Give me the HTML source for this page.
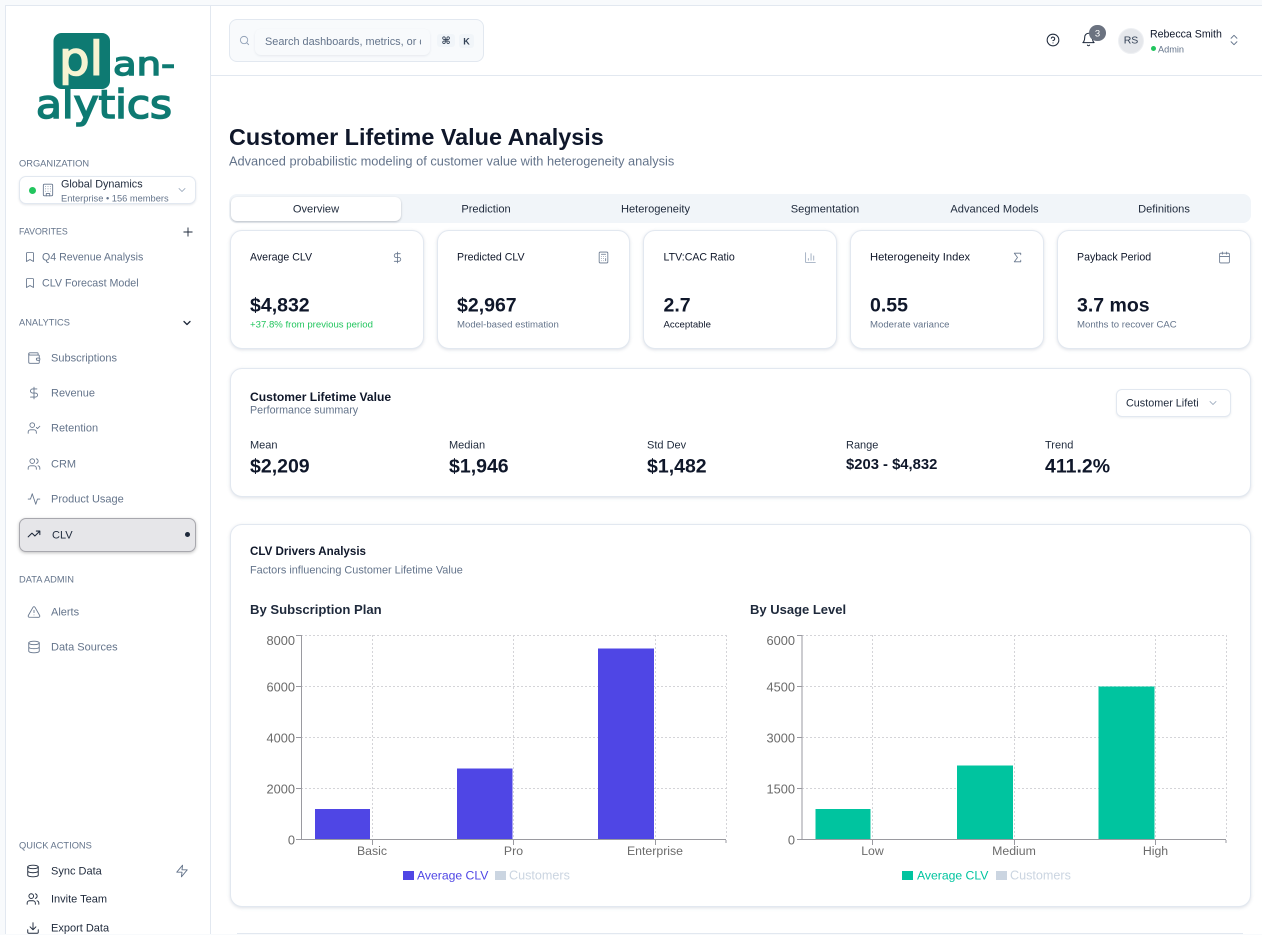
<!DOCTYPE html>
<html lang="en"><head><meta charset="utf-8"><title>Customer Lifetime Value Analysis</title>
<style>
*{box-sizing:border-box}
html,body{margin:0;padding:0}
body{width:1262px;height:934px;overflow:hidden;position:relative;background:#f8fafc;font-family:"Liberation Sans",sans-serif;color:#0f172a}
.t{position:absolute;white-space:nowrap;transform:translateY(calc(-50% + 1px));line-height:1.2}
.c{transform:translate(-50%,calc(-50% + 1px))}
.b{position:absolute}
svg.i{position:absolute;fill:none;stroke:currentColor;stroke-width:2;stroke-linecap:round;stroke-linejoin:round;overflow:visible}
.card{position:absolute;background:#fff;border:1px solid #e2e8f0;border-radius:12px;box-shadow:0 1px 3px rgba(100,116,139,.22)}
.lab{font-size:9.3px;color:#64748b}
.nav{font-size:11px;color:#64748b}
.qa{font-size:11px;color:#1e293b}
.ct{font-size:10.6px;color:#0f172a}
.cv{font-size:19.5px;font-weight:700;color:#0f172a}
.cs{font-size:9.6px;color:#64748b}
.tab{font-size:11.1px;color:#1e293b}
.sl{font-size:11px;color:#1e293b}
.sv{font-size:19.5px;font-weight:700;color:#0f172a}
</style></head><body>

<!-- main surfaces -->
<div class="b" style="left:5px;top:5px;width:1257px;height:929px;background:#fff;border-top:1px solid #e2e8f0;border-left:1px solid #e2e8f0"></div>
<div class="b" style="left:6px;top:6px;width:205px;height:928px;background:#fff;border-right:1px solid #e2e8f0"></div>
<div class="b" style="left:211px;top:75px;width:1051px;height:1px;background:#e2e8f0"></div>

<!-- logo -->
<svg class="b" style="left:30px;top:20px" width="160" height="120" viewBox="30 20 160 120">
<rect x="53.5" y="33" width="56.5" height="56" rx="8" fill="#0e7a72"/>
<text x="59" y="75" font-family="DejaVu Sans" font-size="46" fill="#f6f3d2" stroke="#f6f3d2" stroke-width="1.5" textLength="44" lengthAdjust="spacingAndGlyphs">pl</text>
<text x="113" y="75" font-family="DejaVu Sans" font-size="32" fill="#0e7a72" stroke="#0e7a72" stroke-width="1.4" textLength="62" lengthAdjust="spacingAndGlyphs">an-</text>
<text x="36" y="118" font-family="DejaVu Sans" font-size="39" fill="#0e7a72" stroke="#0e7a72" stroke-width="1.6" textLength="136" lengthAdjust="spacingAndGlyphs">alytics</text>
</svg>

<!-- sidebar -->
<span class="t lab" style="left:19px;top:163px">ORGANIZATION</span>
<div class="b" style="left:19px;top:176px;width:177px;height:28px;border:1px solid #e2e8f0;border-radius:7px;background:#fff;box-shadow:0 1px 2px rgba(100,116,139,.18)"></div>
<div class="b" style="left:29px;top:186.5px;width:7px;height:7px;border-radius:50%;background:#22c55e"></div>
<svg class="i" style="left:41px;top:183px;color:#64748b;stroke-width:1.5" width="14" height="14" viewBox="0 0 24 24"><rect x="4" y="2" width="16" height="20" rx="2"/><path d="M9 22v-4h6v4M8 6h.01M16 6h.01M12 6h.01M12 10h.01M12 14h.01M16 10h.01M16 14h.01M8 10h.01M8 14h.01"/></svg>
<span class="t" style="left:61px;top:184px;font-size:10.8px;color:#1e293b">Global Dynamics</span>
<span class="t" style="left:61px;top:198px;font-size:9.3px;color:#64748b">Enterprise • 156 members</span>
<svg class="i" style="left:176px;top:184px;color:#94a3b8;stroke-width:1.7" width="12" height="12" viewBox="0 0 24 24"><path d="m6 9 6 6 6-6"/></svg>

<span class="t lab" style="left:19px;top:231px;font-size:8.8px">FAVORITES</span>
<svg class="i" style="left:183px;top:227px;color:#1e293b;stroke-width:2.2" width="10" height="10" viewBox="0 0 24 24"><path d="M2 12h20M12 2v20"/></svg>
<svg class="i" style="left:24px;top:251px;color:#64748b;stroke-width:1.7" width="12" height="12" viewBox="0 0 24 24"><path d="m19 21-7-4-7 4V5a2 2 0 0 1 2-2h10a2 2 0 0 1 2 2v16z"/></svg>
<span class="t nav" style="left:42px;top:257px;font-size:10.6px">Q4 Revenue Analysis</span>
<svg class="i" style="left:24px;top:277px;color:#64748b;stroke-width:1.7" width="12" height="12" viewBox="0 0 24 24"><path d="m19 21-7-4-7 4V5a2 2 0 0 1 2-2h10a2 2 0 0 1 2 2v16z"/></svg>
<span class="t nav" style="left:42px;top:283px;font-size:10.7px">CLV Forecast Model</span>

<span class="t lab" style="left:19px;top:322px">ANALYTICS</span>
<svg class="i" style="left:181px;top:317px;color:#1e293b;stroke-width:2.6" width="12" height="12" viewBox="0 0 24 24"><path d="m6 9 6 6 6-6"/></svg>

<svg class="i" style="left:27px;top:350.5px;color:#64748b;stroke-width:1.5" width="14" height="14" viewBox="0 0 24 24"><path d="M19 7V4a1 1 0 0 0-1-1H5a2 2 0 0 0 0 4h15a1 1 0 0 1 1 1v4h-3a2 2 0 0 0 0 4h3a1 1 0 0 0 1-1v-2a1 1 0 0 0-1-1"/><path d="M3 5v14a2 2 0 0 0 2 2h15a1 1 0 0 0 1-1v-4"/></svg>
<span class="t nav" style="left:51px;top:358px">Subscriptions</span>
<svg class="i" style="left:27px;top:386px;color:#64748b;stroke-width:1.5" width="14" height="14" viewBox="0 0 24 24"><path d="M12 2v20M17 5H9.5a3.5 3.5 0 0 0 0 7h5a3.5 3.5 0 0 1 0 7H6"/></svg>
<span class="t nav" style="left:51px;top:393px">Revenue</span>
<svg class="i" style="left:27px;top:421px;color:#64748b;stroke-width:1.5" width="14" height="14" viewBox="0 0 24 24"><path d="M16 21v-2a4 4 0 0 0-4-4H6a4 4 0 0 0-4 4v2"/><circle cx="9" cy="7" r="4"/><path d="m16 11 2 2 4-4"/></svg>
<span class="t nav" style="left:51px;top:428px">Retention</span>
<svg class="i" style="left:27px;top:457px;color:#64748b;stroke-width:1.5" width="14" height="14" viewBox="0 0 24 24"><path d="M16 21v-2a4 4 0 0 0-4-4H6a4 4 0 0 0-4 4v2"/><circle cx="9" cy="7" r="4"/><path d="M22 21v-2a4 4 0 0 0-3-3.87M16 3.13a4 4 0 0 1 0 7.75"/></svg>
<span class="t nav" style="left:51px;top:463.5px">CRM</span>
<svg class="i" style="left:27px;top:492px;color:#64748b;stroke-width:1.5" width="14" height="14" viewBox="0 0 24 24"><path d="M22 12h-4l-3 9L9 3l-3 9H2"/></svg>
<span class="t nav" style="left:51px;top:499px">Product Usage</span>

<div class="b" style="left:19px;top:518px;width:177px;height:33.5px;background:#e6e6e9;border:1px solid #a8a8ae;border-radius:7px;box-shadow:0 1px 3px rgba(0,0,0,.25)"></div>
<svg class="i" style="left:27px;top:527px;color:#1e293b;stroke-width:1.8" width="14" height="14" viewBox="0 0 24 24"><path d="M22 7l-8.5 8.5-5-5L2 17M16 7h6v6"/></svg>
<span class="t" style="left:52px;top:534.5px;font-size:11px;color:#1e293b">CLV</span>
<div class="b" style="left:184.5px;top:532px;width:5px;height:5px;border-radius:50%;background:#1e293b"></div>

<span class="t lab" style="left:19px;top:578.5px">DATA ADMIN</span>
<svg class="i" style="left:27px;top:605px;color:#64748b;stroke-width:1.5" width="14" height="14" viewBox="0 0 24 24"><path d="m21.73 18-8-14a2 2 0 0 0-3.48 0l-8 14A2 2 0 0 0 4 21h16a2 2 0 0 0 1.73-3M12 9v4M12 17h.01"/></svg>
<span class="t nav" style="left:51px;top:612px">Alerts</span>
<svg class="i" style="left:27px;top:640px;color:#64748b;stroke-width:1.5" width="14" height="14" viewBox="0 0 24 24"><ellipse cx="12" cy="5" rx="9" ry="3"/><path d="M3 5V19A9 3 0 0 0 21 19V5M3 12A9 3 0 0 0 21 12"/></svg>
<span class="t nav" style="left:51px;top:647px">Data Sources</span>

<span class="t lab" style="left:19px;top:845px">QUICK ACTIONS</span>
<svg class="i" style="left:26px;top:864px;color:#1e293b;stroke-width:1.6" width="14" height="14" viewBox="0 0 24 24"><ellipse cx="12" cy="5" rx="9" ry="3"/><path d="M3 5V19A9 3 0 0 0 21 19V5M3 12A9 3 0 0 0 21 12"/></svg>
<span class="t qa" style="left:51px;top:871px">Sync Data</span>
<svg class="i" style="left:175px;top:864px;color:#64748b;stroke-width:1.6" width="14" height="14" viewBox="0 0 24 24"><path d="M13 2 3 14h9l-1 8 10-12h-9l1-8z"/></svg>
<svg class="i" style="left:26px;top:892px;color:#1e293b;stroke-width:1.6" width="14" height="14" viewBox="0 0 24 24"><path d="M16 21v-2a4 4 0 0 0-4-4H6a4 4 0 0 0-4 4v2"/><circle cx="9" cy="7" r="4"/><path d="M22 21v-2a4 4 0 0 0-3-3.87M16 3.13a4 4 0 0 1 0 7.75"/></svg>
<span class="t qa" style="left:51px;top:899px">Invite Team</span>
<svg class="i" style="left:26px;top:921px;color:#1e293b;stroke-width:1.6" width="14" height="14" viewBox="0 0 24 24"><path d="M21 15v4a2 2 0 0 1-2 2H5a2 2 0 0 1-2-2v-4"/><path d="m7 10 5 5 5-5M12 15V3"/></svg>
<span class="t qa" style="left:51px;top:927.5px">Export Data</span>

<!-- top bar -->
<div class="b" style="left:229px;top:19px;width:255px;height:43px;background:#f8fafc;border:1px solid #e2e8f0;border-radius:8px"></div>
<svg class="i" style="left:239px;top:35px;color:#94a3b8" width="11" height="11" viewBox="0 0 24 24"><circle cx="11" cy="11" r="8"/><path d="m21 21-4.3-4.3"/></svg>
<div class="b" style="left:255px;top:29px;width:175px;height:26px;background:#f8fafc;border-radius:6px;box-shadow:0 1px 2px rgba(100,116,139,.12)"></div>
<div class="b" style="left:265px;top:32.5px;width:156px;height:18px;overflow:hidden;font-size:10.9px;line-height:18px;color:#64748b;white-space:nowrap">Search dashboards, metrics, or data...</div>
<div class="b" style="left:437px;top:34px;width:18px;height:13px;background:#f1f5f9;border-radius:3px"></div>
<span class="t c" style="left:446px;top:41px;font-size:10px;font-weight:700;color:#334155;font-family:'DejaVu Sans',sans-serif">⌘</span>
<div class="b" style="left:459px;top:34px;width:15px;height:14px;background:#f1f5f9;border-radius:3px"></div>
<span class="t c" style="left:466.5px;top:40.5px;font-size:9px;font-weight:700;color:#334155">K</span>

<svg class="i" style="left:1046px;top:33px;color:#1e293b;stroke-width:1.8" width="14" height="14" viewBox="0 0 24 24"><circle cx="12" cy="12" r="10"/><path d="M9.09 9a3 3 0 0 1 5.83 1c0 2-3 3-3 3M12 17h.01"/></svg>
<svg class="i" style="left:1080.5px;top:32px;color:#1e293b;stroke-width:1.7" width="15" height="15" viewBox="0 0 24 24"><path d="M6 8a6 6 0 0 1 12 0c0 7 3 9 3 9H3s3-2 3-9"/><path d="M10.3 21a1.94 1.94 0 0 0 3.4 0"/></svg>
<div class="b" style="left:1089px;top:25px;width:17px;height:16px;border-radius:8px;background:#6b7280"></div>
<span class="t c" style="left:1097.5px;top:32.5px;font-size:9.5px;color:#fff">3</span>
<div class="b" style="left:1118px;top:28px;width:26px;height:26px;border-radius:50%;background:#e5e7eb;border:1px solid #eef0f3"></div>
<span class="t c" style="left:1131px;top:40px;font-size:10.5px;color:#334155">RS</span>
<span class="t" style="left:1150px;top:34px;font-size:10.6px;color:#0f172a">Rebecca Smith</span>
<div class="b" style="left:1150.5px;top:46px;width:5px;height:5px;border-radius:50%;background:#22c55e"></div>
<span class="t" style="left:1158px;top:48.5px;font-size:9.2px;color:#64748b">Admin</span>
<svg class="i" style="left:1227px;top:33px;color:#64748b;stroke-width:1.6" width="14" height="14" viewBox="0 0 24 24"><path d="m7 15 5 5 5-5M7 9l5-5 5 5"/></svg>

<!-- heading -->
<span class="t" style="left:229px;top:135.5px;font-size:23.4px;font-weight:700;color:#0f172a">Customer Lifetime Value Analysis</span>
<span class="t" style="left:229px;top:159.5px;font-size:12.8px;color:#64748b">Advanced probabilistic modeling of customer value with heterogeneity analysis</span>

<!-- tabs -->
<div class="b" style="left:229px;top:194px;width:1022px;height:28.5px;background:#f1f5f9;border-radius:8px"></div>
<div class="b" style="left:231px;top:196.5px;width:170px;height:24.5px;background:#fff;border-radius:6px;box-shadow:0 1px 2px rgba(15,23,42,.25)"></div>
<span class="t c tab" style="left:316px;top:209px">Overview</span>
<span class="t c tab" style="left:486px;top:209px">Prediction</span>
<span class="t c tab" style="left:655.5px;top:209px">Heterogeneity</span>
<span class="t c tab" style="left:825px;top:209px">Segmentation</span>
<span class="t c tab" style="left:994.5px;top:209px">Advanced Models</span>
<span class="t c tab" style="left:1164px;top:209px">Definitions</span>

<!-- KPI cards -->
<div class="card" style="left:229.5px;top:230px;width:194px;height:119px"></div>
<div class="card" style="left:436.5px;top:230px;width:193.5px;height:119px"></div>
<div class="card" style="left:643px;top:230px;width:194px;height:119px"></div>
<div class="card" style="left:850px;top:230px;width:194px;height:119px"></div>
<div class="card" style="left:1057px;top:230px;width:194px;height:119px"></div>

<span class="t ct" style="left:250px;top:256.5px">Average CLV</span>
<svg class="i" style="left:390.5px;top:251px;color:#64748b;stroke-width:1.5" width="13" height="13" viewBox="0 0 24 24"><path d="M12 2v20M17 5H9.5a3.5 3.5 0 0 0 0 7h5a3.5 3.5 0 0 1 0 7H6"/></svg>
<span class="t cv" style="left:250px;top:304.5px">$4,832</span>
<span class="t cs" style="left:250px;top:323.5px;color:#22c55e">+37.8% from previous period</span>

<span class="t ct" style="left:457px;top:256.5px">Predicted CLV</span>
<svg class="i" style="left:597px;top:251px;color:#64748b;stroke-width:1.5" width="13" height="13" viewBox="0 0 24 24"><rect x="4" y="2" width="16" height="20" rx="2"/><path d="M8 6h8M16 14v4M16 10h.01M12 10h.01M8 10h.01M12 14h.01M8 14h.01M12 18h.01M8 18h.01"/></svg>
<span class="t cv" style="left:457px;top:304.5px">$2,967</span>
<span class="t cs" style="left:457px;top:323.5px">Model-based estimation</span>

<span class="t ct" style="left:663.5px;top:256.5px">LTV:CAC Ratio</span>
<svg class="i" style="left:804px;top:251px;color:#94a3b8;stroke-width:1.5" width="13" height="13" viewBox="0 0 24 24"><path d="M3 3v18h18M18 17V9M13 17V5M8 17v-3"/></svg>
<span class="t cv" style="left:663.5px;top:304.5px">2.7</span>
<span class="t cs" style="left:663.5px;top:323.5px;color:#0f172a">Acceptable</span>

<span class="t ct" style="left:870px;top:256.5px;font-size:11.2px">Heterogeneity Index</span>
<svg class="i" style="left:1011px;top:251px;color:#64748b;stroke-width:1.5" width="13" height="13" viewBox="0 0 24 24"><path d="M18 7V4H6l6 8-6 8h12v-3"/></svg>
<span class="t cv" style="left:870px;top:304.5px">0.55</span>
<span class="t cs" style="left:870px;top:323.5px">Moderate variance</span>

<span class="t ct" style="left:1077px;top:256.5px">Payback Period</span>
<svg class="i" style="left:1218px;top:251px;color:#64748b;stroke-width:1.5" width="13" height="13" viewBox="0 0 24 24"><rect x="3" y="4" width="18" height="18" rx="2"/><path d="M16 2v4M8 2v4M3 10h18"/></svg>
<span class="t cv" style="left:1077px;top:304.5px">3.7 mos</span>
<span class="t cs" style="left:1077px;top:323.5px">Months to recover CAC</span>

<!-- summary card -->
<div class="card" style="left:229.5px;top:368px;width:1021.5px;height:129px"></div>
<span class="t" style="left:250px;top:395.5px;font-size:12.1px;font-weight:700;color:#0f172a">Customer Lifetime Value</span>
<span class="t" style="left:250px;top:409.5px;font-size:10.7px;color:#64748b">Performance summary</span>
<div class="b" style="left:1116px;top:389px;width:115px;height:28px;background:#fff;border:1px solid #e2e8f0;border-radius:6px;box-shadow:0 1px 2px rgba(100,116,139,.12)"></div>
<span class="t" style="left:1126px;top:402.5px;font-size:10.8px;color:#1e293b">Customer Lifeti</span>
<svg class="i" style="left:1207px;top:397px;color:#94a3b8;stroke-width:1.7" width="12" height="12" viewBox="0 0 24 24"><path d="m6 9 6 6 6-6"/></svg>

<span class="t sl" style="left:250px;top:444.5px">Mean</span>
<span class="t sv" style="left:250px;top:465.5px">$2,209</span>
<span class="t sl" style="left:449px;top:444.5px">Median</span>
<span class="t sv" style="left:449px;top:465.5px">$1,946</span>
<span class="t sl" style="left:647px;top:444.5px">Std Dev</span>
<span class="t sv" style="left:647px;top:465.5px">$1,482</span>
<span class="t sl" style="left:846px;top:444.5px">Range</span>
<span class="t" style="left:846px;top:465px;font-size:14.8px;font-weight:700;color:#0f172a">$203 - $4,832</span>
<span class="t sl" style="left:1045px;top:444.5px">Trend</span>
<span class="t sv" style="left:1045px;top:465.5px">411.2%</span>

<!-- drivers card -->
<div class="card" style="left:229.5px;top:524px;width:1021.5px;height:383px"></div>
<span class="t" style="left:250px;top:551px;font-size:11.6px;font-weight:700;color:#0f172a">CLV Drivers Analysis</span>
<span class="t" style="left:250px;top:570px;font-size:10.9px;color:#64748b">Factors influencing Customer Lifetime Value</span>
<span class="t" style="left:250px;top:609px;font-size:13.1px;font-weight:700;color:#1e293b">By Subscription Plan</span>
<span class="t" style="left:750px;top:609px;font-size:13px;font-weight:700;color:#1e293b">By Usage Level</span>

<svg class="b" style="left:0;top:0" width="1262" height="934" viewBox="0 0 1262 934" font-family="Liberation Sans" font-size="14">
<g fill="none" stroke="#d4d4d8" stroke-width="1" stroke-dasharray="2 2">
<path d="M301 635.5H726M301 686.5H726M301 737.5H726M301 788.5H726M372.5 635V839M513.5 635V839M655.5 635V839M726.5 635V839"/>
<path d="M802 635.5H1226M802 686.5H1226M802 737.5H1226M802 788.5H1226M872.5 635V839M1014.5 635V839M1155.5 635V839M1226.5 635V839"/>
</g>
<g fill="none" stroke="#9a9aa0" stroke-width="1">
<path d="M301.5 635V839.5H726M296 635.5H301M296 686.5H301M296 737.5H301M296 788.5H301M296 839.5H301M372.5 840V845M513.5 840V845M655.5 840V845M726 840V843"/>
<path d="M802 635V839.5H1226M797 635.5H802M797 686.5H802M797 737.5H802M797 788.5H802M797 839.5H802M872.5 840V845M1014.5 840V845M1155.5 840V845M1226 840V843"/>
</g>
<rect x="315" y="809" width="55" height="30" fill="#4f46e5"/>
<rect x="457" y="768.5" width="55.5" height="70.5" fill="#4f46e5"/>
<rect x="598" y="648.5" width="56" height="190.5" fill="#4f46e5"/>
<rect x="815.5" y="809" width="55" height="30" fill="#00c49f"/>
<rect x="957" y="765.5" width="56" height="73.5" fill="#00c49f"/>
<rect x="1098.5" y="686.5" width="56" height="152.5" fill="#00c49f"/>
<g fill="#6b6b6b" text-anchor="end" font-size="12.8">
<text x="295" y="645">8000</text><text x="295" y="691.5">6000</text><text x="295" y="742.5">4000</text><text x="295" y="793.5">2000</text><text x="295" y="844.5">0</text>
<text x="795" y="645">6000</text><text x="795" y="691.5">4500</text><text x="795" y="742.5">3000</text><text x="795" y="793.5">1500</text><text x="795" y="844.5">0</text>
</g>
<g fill="#6b6b6b" text-anchor="middle" font-size="12.3">
<text x="372" y="855">Basic</text><text x="513.5" y="855">Pro</text><text x="655" y="855">Enterprise</text>
<text x="872.5" y="855">Low</text><text x="1014" y="855">Medium</text><text x="1155.5" y="855">High</text>
</g>
<g font-size="12">
<rect x="403" y="871" width="11" height="9" fill="#4f46e5"/><text x="417" y="879.5" fill="#4f46e5" font-size="12.2">Average CLV</text>
<rect x="495" y="871" width="11" height="9" fill="#cbd5e1"/><text x="509" y="879.5" fill="#cbd5e1" font-size="12.6">Customers</text>
<rect x="902" y="871" width="11" height="9" fill="#00c49f"/><text x="917" y="879.5" fill="#00c49f" font-size="12.2">Average CLV</text>
<rect x="996" y="871" width="11" height="9" fill="#cbd5e1"/><text x="1010" y="879.5" fill="#cbd5e1" font-size="12.6">Customers</text>
</g>
</svg>

<!-- next card top edge -->
<div class="b" style="left:237px;top:933px;width:1006px;height:1px;background:#e2e8f0"></div>
</body></html>
